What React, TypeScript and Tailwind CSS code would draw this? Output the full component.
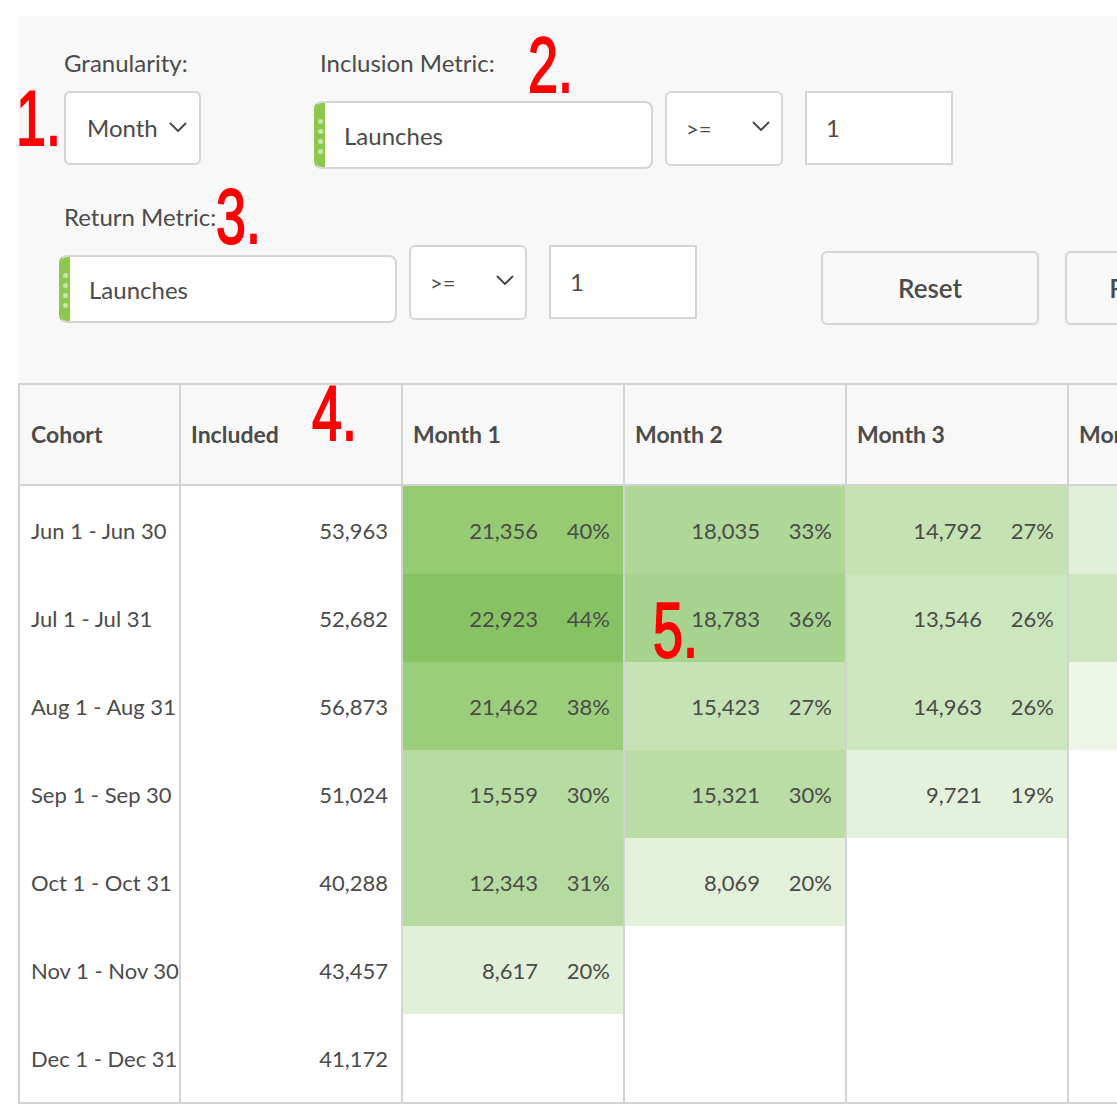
import { ReactNode } from "react";

type Cell = { value?: string; pct?: string; bg: string };

interface Row {
  cohort: string;
  included: string;
  cells: Cell[];
}

const W = "#ffffff";

const rows: Row[] = [
  {
    cohort: "Jun 1 - Jun 30",
    included: "53,963",
    cells: [
      { value: "21,356", pct: "40%", bg: "#96cb74" },
      { value: "18,035", pct: "33%", bg: "#afd797" },
      { value: "14,792", pct: "27%", bg: "#c5e2b2" },
      { bg: "#e3f0d9" },
    ],
  },
  {
    cohort: "Jul 1 - Jul 31",
    included: "52,682",
    cells: [
      { value: "22,923", pct: "44%", bg: "#88c363" },
      { value: "18,783", pct: "36%", bg: "#a6d38e" },
      { value: "13,546", pct: "26%", bg: "#cce6bd" },
      { bg: "#cde6bd" },
    ],
  },
  {
    cohort: "Aug 1 - Aug 31",
    included: "56,873",
    cells: [
      { value: "21,462", pct: "38%", bg: "#9bce7b" },
      { value: "15,423", pct: "27%", bg: "#c5e3b4" },
      { value: "14,963", pct: "26%", bg: "#cce6bd" },
      { bg: "#eef6ea" },
    ],
  },
  {
    cohort: "Sep 1 - Sep 30",
    included: "51,024",
    cells: [
      { value: "15,559", pct: "30%", bg: "#b7dca2" },
      { value: "15,321", pct: "30%", bg: "#b9dda4" },
      { value: "9,721", pct: "19%", bg: "#e4f1dc" },
      { bg: W },
    ],
  },
  {
    cohort: "Oct 1 - Oct 31",
    included: "40,288",
    cells: [
      { value: "12,343", pct: "31%", bg: "#b6dba0" },
      { value: "8,069", pct: "20%", bg: "#e3f0da" },
      { bg: W },
      { bg: W },
    ],
  },
  {
    cohort: "Nov 1 - Nov 30",
    included: "43,457",
    cells: [{ value: "8,617", pct: "20%", bg: "#e2f0d9" }, { bg: W }, { bg: W }, { bg: W }],
  },
  {
    cohort: "Dec 1 - Dec 31",
    included: "41,172",
    cells: [{ bg: W }, { bg: W }, { bg: W }, { bg: W }],
  },
];

const Chevron = () => (
  <svg width="18" height="11" viewBox="0 0 18 11" fill="none">
    <polyline points="1.5,1.5 9,9 16.5,1.5" stroke="#4b4b4b" strokeWidth="2" strokeLinecap="round" strokeLinejoin="round" />
  </svg>
);

const Label = ({ children, className = "" }: { children: ReactNode; className?: string }) => (
  <div className={`text-[24px] leading-[28px] text-[#4b4b4b] mb-[14px] ${className}`}>{children}</div>
);

const MetricBox = ({ width }: { width: string }) => (
  <div
    className={`mt-[10px] flex h-[68px] shrink-0 ${width} overflow-hidden rounded-lg border-2 border-[#d5d5d5] border-l-[#8cc84b] bg-white`}
  >
    <div className="flex w-[9px] flex-col items-center justify-center gap-[5px] bg-[#8cc84b] pt-[2px]">
      <span className="h-[5px] w-[5px] rounded-full bg-[#cbe6ab]" />
      <span className="h-[5px] w-[5px] rounded-full bg-[#cbe6ab]" />
      <span className="h-[5px] w-[5px] rounded-full bg-[#cbe6ab]" />
      <span className="h-[5px] w-[5px] rounded-full bg-[#cbe6ab]" />
    </div>
    <span className="flex items-center pl-[19px] pt-[2px] text-[24px] text-[#4b4b4b]">Launches</span>
  </div>
);

const OperatorSelect = () => (
  <div className="ml-[12px] flex h-[75px] w-[118px] shrink-0 items-center justify-between rounded-md border-2 border-[#d5d5d5] bg-white pl-[19px] pr-[11px]">
    <span className="text-[22px] text-[#4b4b4b]">&gt;=</span>
    <span className="-mt-[4px]">
      <Chevron />
    </span>
  </div>
);

const NumberInput = () => (
  <div className="ml-[22px] flex h-[74px] w-[148px] shrink-0 items-center border-2 border-[#d5d5d5] bg-white pl-[19px] text-[24px] text-[#4b4b4b]">
    1
  </div>
);

const Marker = ({ text, className }: { text: string; className: string }) => (
  <span
    className={`absolute origin-left scale-x-[0.7] font-['Liberation_Sans',sans-serif] text-[77px] leading-none text-[#ff0000] [-webkit-text-stroke:2px_#ff0000] ${className}`}
  >
    {text}
  </span>
);

const App = () => {
  return (
    <div className="relative min-h-screen w-full overflow-hidden bg-white font-[Lato,sans-serif] text-[#4b4b4b]">
      <div className="ml-[18px] mt-[16px]">
        {/* controles */}
        <div className="h-[367px] bg-[#f8f8f8] pl-[46px] pt-[33px]">
          <div className="flex items-start">
            <div className="flex shrink-0 flex-col">
              <Label>Granularity:</Label>
              <div className="flex h-[74px] w-[137px] items-center justify-between rounded-md border-2 border-[#d5d5d5] bg-white pl-[21px] pr-[12px]">
                <span className="text-[24px]">Month</span>
                <span className="-mt-[2px]">
                  <Chevron />
                </span>
              </div>
            </div>

            <div className="ml-[113px] flex shrink-0 flex-col">
              <Label className="ml-[6px]">Inclusion Metric:</Label>
              <div className="flex items-start">
                <MetricBox width="w-[339px]" />
                <OperatorSelect />
                <NumberInput />
              </div>
            </div>
          </div>

          <div className="mt-[34px] flex flex-col">
            <Label>Return Metric:</Label>
            <div className="-ml-[5px] flex items-start">
              <MetricBox width="w-[338px]" />
              <OperatorSelect />
              <NumberInput />
              <button className="ml-[124px] mt-[6px] h-[74px] w-[218px] shrink-0 rounded-md border-2 border-[#d5d5d5] bg-[#f9f9f9] text-[26px] font-semibold text-[#4b4b4b]">
                Reset
              </button>
              <button className="ml-[26px] mt-[6px] h-[74px] w-[218px] shrink-0 rounded-md border-2 border-[#d5d5d5] bg-[#f9f9f9] text-[26px] font-semibold whitespace-nowrap text-[#4b4b4b]">
                Run Report
              </button>
            </div>
          </div>
        </div>

        {/* tabela */}
        <div className="w-max border-y-2 border-[#d3d3d3]">
          <div className="grid grid-cols-[161px_222px_222px_222px_222px_222px]">
            <div className="flex h-[101px] items-center border-b-2 border-l-2 border-[#d3d3d3] bg-[#f8f8f8] pl-[11px] text-[23px] font-bold">
              Cohort
            </div>
            <div className="flex h-[101px] items-center border-b-2 border-l-2 border-[#d3d3d3] bg-[#f8f8f8] pl-[10px] text-[23px] font-bold">
              Included
            </div>
            {["Month 1", "Month 2", "Month 3", "Month 4"].map((m) => (
              <div
                key={m}
                className="flex h-[101px] items-center whitespace-nowrap border-b-2 border-l-2 border-[#d3d3d3] bg-[#f8f8f8] pl-[10px] text-[23px] font-bold"
              >
                {m}
              </div>
            ))}

            {rows.map((r) => (
              <div key={r.cohort} className="contents">
                <div className="flex h-[88px] items-center overflow-hidden whitespace-nowrap border-l-2 border-[#d3d3d3] bg-white pl-[11px] text-[22px]">
                  {r.cohort}
                </div>
                <div className="flex h-[88px] items-center justify-end border-l-2 border-[#d3d3d3] bg-white pr-[13px] text-[22px]">
                  {r.included}
                </div>
                {r.cells.map((c, i) => (
                  <div
                    key={i}
                    className="flex h-[88px] items-center justify-end border-l-2 border-[#d3d3d3] pr-[13px] text-[22px]"
                    style={{ backgroundColor: c.bg }}
                  >
                    {c.value && <span>{c.value}</span>}
                    {c.pct && <span className="w-[72px] text-right">{c.pct}</span>}
                  </div>
                ))}
              </div>
            ))}
          </div>
        </div>
      </div>

      {/* anotações */}
      <Marker text="1." className="left-[16px] top-[80px]" />
      <Marker text="2." className="left-[528px] top-[27px]" />
      <Marker text="3." className="left-[216px] top-[178px]" />
      <Marker text="4." className="left-[312px] top-[375px]" />
      <Marker text="5." className="left-[653px] top-[592px]" />
    </div>
  );
};

export default App;
